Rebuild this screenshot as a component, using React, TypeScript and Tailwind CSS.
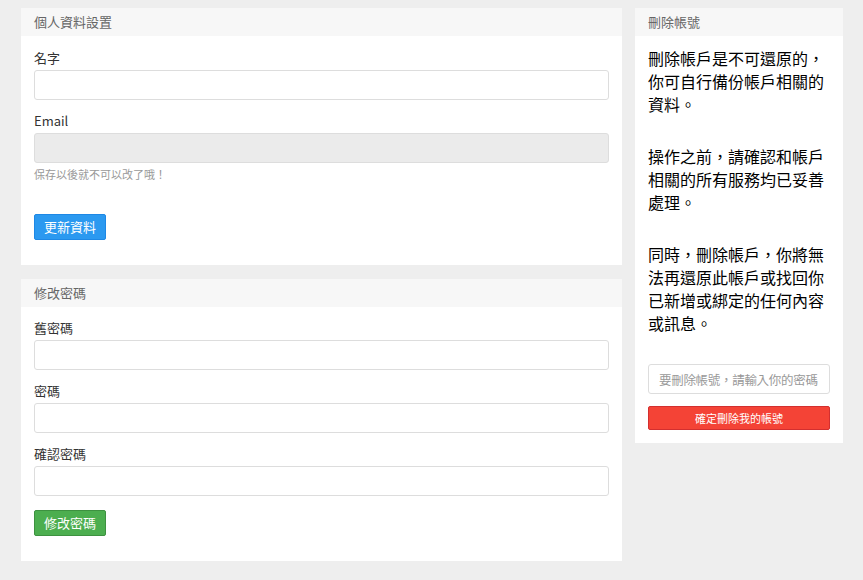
const font = { fontFamily: '"Noto Sans CJK TC", "Liberation Sans", sans-serif' }

function Field({ label, disabled }: { label: string; disabled?: boolean }) {
  return (
    <div>
      <div className="text-[13px] leading-[17px] text-[#333]">{label}</div>
      <div
        className={`mt-[4px] h-[30px] rounded-[3px] border border-[#ddd] ${disabled ? 'bg-[#ebebeb]' : 'bg-white'}`}
      />
    </div>
  )
}

function Header({ title }: { title: string }) {
  return <div className="flex h-[28px] items-center bg-[#f7f7f7] px-[13px] text-[13px] text-[#666]">{title}</div>
}

export default function App() {
  return (
    <div style={font} className="flex h-[580px] w-[863px] gap-[13px] bg-[#eeeeee] pl-[21px] pt-[8px]">
      <div className="flex w-[601px] flex-col gap-[14px]">
        <div className="bg-white">
          <Header title="個人資料設置" />
          <div className="px-[13px] pb-[25px] pt-[13px]">
            <Field label="名字" />
            <div className="mt-[12px]">
              <Field label="Email" disabled />
            </div>
            <div className="mt-[3px] text-[11px] leading-[16px] text-[#999]">保存以後就不可以改了哦！</div>
            <button className="mt-[32px] h-[26px] w-[72px] rounded-[2px] border border-[#1e88e5] bg-[#2b99f0] text-[13px] text-white">
              更新資料
            </button>
          </div>
        </div>
        <div className="bg-white">
          <Header title="修改密碼" />
          <div className="flex flex-col gap-[12px] px-[13px] pb-[25px] pt-[12px]">
            <Field label="舊密碼" />
            <Field label="密碼" />
            <Field label="確認密碼" />
            <button className="mt-[2px] h-[26px] w-[72px] rounded-[2px] border border-[#3d9140] bg-[#4cae4f] text-[13px] text-white">
              修改密碼
            </button>
          </div>
        </div>
      </div>
      <div className="h-[435px] w-[208px] bg-white">
        <Header title="刪除帳號" />
        <div className="px-[13px] pt-[11px] text-[16px] font-normal leading-[23px] text-black">
          <p>刪除帳戶是不可還原的，你可自行備份帳戶相關的資料。</p>
          <p className="mt-[29px]">操作之前，請確認和帳戶相關的所有服務均已妥善處理。</p>
          <p className="mt-[29px]">同時，刪除帳戶，你將無法再還原此帳戶或找回你已新增或綁定的任何內容或訊息。</p>
          <div className="mt-[29px] flex h-[30px] items-center whitespace-nowrap rounded-[3px] border border-[#ddd] px-[10px] text-[12.5px] tracking-[-0.3px] text-[#999]">
            要刪除帳號，請輸入你的密碼
          </div>
          <button className="mt-[12px] h-[24px] w-full rounded-[2px] border border-[#d32f2f] bg-[#f44336] text-[11px] text-white">
            確定刪除我的帳號
          </button>
        </div>
      </div>
    </div>
  )
}
